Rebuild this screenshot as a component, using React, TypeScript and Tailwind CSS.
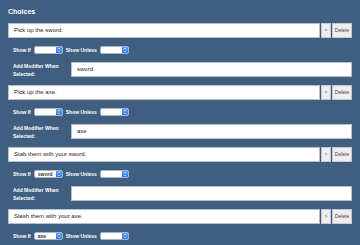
import React from 'react';

interface Choice {
  text: string;
  showIf: string;
  showUnless: string;
  modifier: string;
}

const choices: Choice[] = [
  { text: 'Pick up the sword.', showIf: '', showUnless: '', modifier: 'sword' },
  { text: 'Pick up the axe.', showIf: '', showUnless: '', modifier: 'axe' },
  { text: 'Stab them with your sword.', showIf: 'sword', showUnless: '', modifier: '' },
  { text: 'Slash them with your axe.', showIf: 'axe', showUnless: '', modifier: '' },
];

const Select: React.FC<{ value: string }> = ({ value }) => (
  <div className="w-[29px] h-[8px] flex items-stretch bg-white border border-[#aab3bf] rounded-[2px] overflow-hidden">
    <span className="flex-1 pl-[3px] text-[5px] leading-[6px] text-[#333] truncate">{value}</span>
    <span className="w-[6px] bg-gradient-to-b from-[#5aa2fb] to-[#2f76e8] flex items-center justify-center">
      <svg width="4" height="6" viewBox="0 0 4 6" fill="none" stroke="#fff" strokeWidth="0.8">
        <path d="M1 2.2 L2 1.2 L3 2.2" />
        <path d="M1 3.8 L2 4.8 L3 3.8" />
      </svg>
    </span>
  </div>
);

const ChoiceBlock: React.FC<{ choice: Choice }> = ({ choice }) => (
  <div className="flex flex-col gap-2">
    {/* Choice text + buttons */}
    <div className="flex h-[15px] gap-[1px]">
      <div className="flex-1 flex items-center bg-white border border-[#b7bfca] px-[5px] text-[6px] text-[#222]">
        {choice.text}
      </div>
      <button className="w-[10px] bg-[#eeeeee] border border-[#c4c8ce] text-[5px] text-[#444] flex items-center justify-center">
        &gt;
      </button>
      <button className="w-[20px] bg-[#eeeeee] border border-[#c4c8ce] text-[5px] text-[#444] flex items-center justify-center">
        Delete
      </button>
    </div>

    {/* Show if / unless */}
    <div className="flex items-center h-[8px] leading-[6px] gap-[3px] pl-[5px] text-[5px] font-bold text-white">
      <span>Show If</span>
      <Select value={choice.showIf} />
      <span>Show Unless</span>
      <Select value={choice.showUnless} />
    </div>

    {/* Modifier */}
    <div className="flex items-center h-[15px] pl-[5px]">
      <div className="w-[58px] text-[5px] leading-[8px] font-bold text-white">
        Add Modifier When
        <br />
        Selected:
      </div>
      <div className="flex-1 h-full flex items-center bg-white border border-[#b7bfca] px-[5px] text-[6px] text-[#222]">
        {choice.modifier}
      </div>
    </div>
  </div>
);

export default function App() {
  return (
    <div
      className="w-full h-[245px] overflow-hidden bg-[#405f80] pt-2 px-2"
      style={{ fontFamily: '"Liberation Sans", Arial, sans-serif' }}
    >
      <h2 className="h-[8px] leading-[8px] mb-[7px] text-[7px] font-semibold text-white">Choices</h2>
      <div className="flex flex-col gap-2">
        {choices.map((c, i) => (
          <ChoiceBlock key={i} choice={c} />
        ))}
      </div>
    </div>
  );
}
